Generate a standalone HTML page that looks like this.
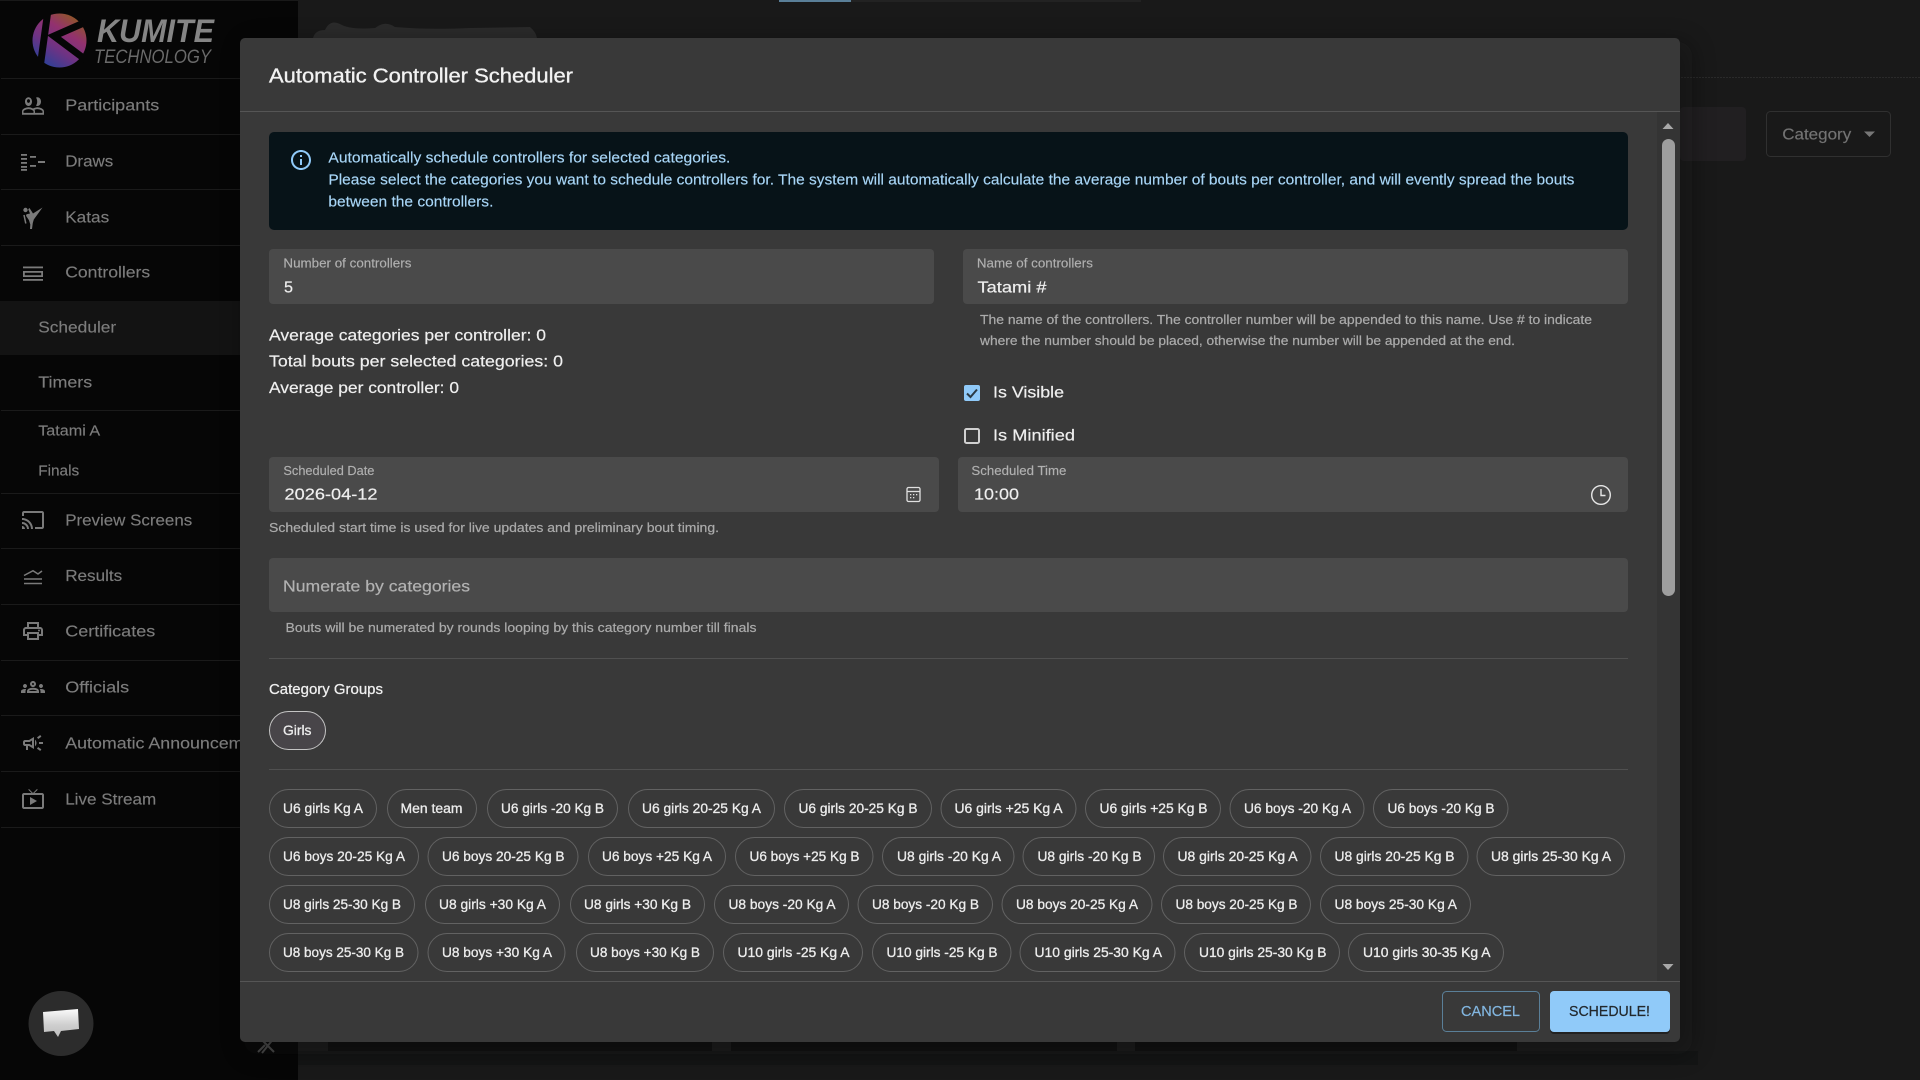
<!DOCTYPE html>
<html lang="en">
<head>
<meta charset="utf-8">
<title>Automatic Controller Scheduler</title>
<style>
html,body{margin:0;padding:0;background:#191919;width:1920px;height:1080px;overflow:hidden}
svg{display:block}
text{font-family:"Liberation Sans",sans-serif;white-space:pre}
.n{font-size:16px;fill:#7c7c7c;stroke:#7c7c7c;stroke-width:.15;transform:translateX(-.8px)}
.l{font-size:13px;fill:#b0b0b0;stroke:#b0b0b0;stroke-width:.15;transform:translateX(-.6px)}
.v{font-size:16px;fill:#efefef;stroke:#efefef;stroke-width:.2}
.a{font-size:14.5px;fill:#a8d6f7;stroke:#a8d6f7;stroke-width:.15;transform:translateX(-.6px)}
.h{font-size:12.5px;fill:#ababab;stroke:#ababab;stroke-width:.2}
.c{font-size:13.5px;fill:#ececec;stroke:#ececec;stroke-width:.3}
.chip{fill:none;stroke:#626262;stroke-width:1}
.i{fill:#7a7a7a}
</style>
</head>
<body>
<svg xmlns="http://www.w3.org/2000/svg" width="1920" height="1080" viewBox="0 0 1920 1080">
<defs>
<linearGradient id="lg" x1="0.85" y1="0" x2="0.2" y2="1">
<stop offset="0" stop-color="#8f5f16"/><stop offset=".35" stop-color="#93316f"/><stop offset=".65" stop-color="#6d3384"/><stop offset="1" stop-color="#24429a"/>
</linearGradient>
<linearGradient id="bub" x1="0" y1="0" x2="0" y2="1">
<stop offset="0" stop-color="#fbfbfb"/><stop offset=".55" stop-color="#d0d0d0"/><stop offset="1" stop-color="#bdbdbd"/>
</linearGradient>
<filter id="sh" x="-10%" y="-10%" width="120%" height="120%"><feGaussianBlur stdDeviation="12"/></filter>
</defs>

<!-- page background -->
<rect width="1920" height="1080" fill="#191919"/>
<rect x="779" y="0" width="72" height="2" fill="#5a7f98"/>
<rect x="851" y="0" width="290" height="2" fill="#222"/>
<path d="M313 38Q315 30 325 30Q330 19 340 24Q350 30 375 28Q385 20 395 27Q430 30 470 28L530 27Q536 32 537 38z" fill="#2b2b2b"/>
<line x1="298" y1="77.5" x2="1920" y2="77.5" stroke="#2a2a2a" stroke-dasharray="2 1"/>
<rect x="1680" y="107" width="66" height="54" rx="4" fill="#211f21"/>
<rect x="1766.500" y="111.500" width="124" height="45" rx="4" fill="none" stroke="#303030"/>
<text class="n" x="1783" y="139.500" textLength="69" lengthAdjust="spacingAndGlyphs" style="fill:#737373;stroke:#737373">Category</text>
<path d="M1864 131.500h11l-5.500 5.500z" fill="#777"/>
<rect x="328" y="1042" width="384" height="9" fill="#0d0d0d"/>
<rect x="731" y="1042" width="386" height="9" fill="#0d0d0d"/>
<rect x="1135" y="1042" width="382" height="9" fill="#0d0d0d"/>
<rect x="298" y="1051" width="1400" height="14" fill="#141515"/>

<!-- sidebar -->
<rect x="0" y="1" width="298" height="1079" fill="#060606"/>
<rect x="0" y="301" width="298" height="54" fill="#131313"/>
<g stroke="#1a1a1a">
<line x1="1" y1="78.500" x2="298" y2="78.500"/><line x1="1" y1="134.500" x2="298" y2="134.500"/><line x1="1" y1="189.500" x2="298" y2="189.500"/><line x1="1" y1="245.500" x2="298" y2="245.500"/><line x1="1" y1="410.500" x2="298" y2="410.500"/><line x1="1" y1="493.500" x2="298" y2="493.500"/><line x1="1" y1="548.500" x2="298" y2="548.500"/><line x1="1" y1="604.500" x2="298" y2="604.500"/><line x1="1" y1="660.500" x2="298" y2="660.500"/><line x1="1" y1="715.500" x2="298" y2="715.500"/><line x1="1" y1="771.500" x2="298" y2="771.500"/><line x1="1" y1="827.500" x2="298" y2="827.500"/>
</g>

<!-- logo -->
<circle cx="59.500" cy="40.500" r="27" fill="url(#lg)"/>
<path d="M48 10L40 68" stroke="#060606" stroke-width="7" fill="none"/>
<path d="M86 22L54 36L86 60" stroke="#060606" stroke-width="7" fill="none"/>
<text x="97" y="42" font-size="32" font-weight="700" font-style="italic" fill="#858585" textLength="117" lengthAdjust="spacingAndGlyphs">KUMITE</text>
<text x="94" y="63" font-size="19" font-style="italic" fill="#6a6a6a" textLength="117" lengthAdjust="spacingAndGlyphs">TECHNOLOGY</text>

<!-- sidebar text -->
<text class="n" x="66" y="110.500" textLength="94" lengthAdjust="spacingAndGlyphs">Participants</text>
<text class="n" x="66" y="166.500" textLength="48" lengthAdjust="spacingAndGlyphs">Draws</text>
<text class="n" x="66" y="222.500" textLength="44" lengthAdjust="spacingAndGlyphs">Katas</text>
<text class="n" x="66" y="277.500" textLength="85" lengthAdjust="spacingAndGlyphs">Controllers</text>
<text class="n" x="39" y="332.500" textLength="78" lengthAdjust="spacingAndGlyphs">Scheduler</text>
<text class="n" x="39" y="387.500" textLength="54" lengthAdjust="spacingAndGlyphs">Timers</text>
<text class="n" x="39" y="435.500" textLength="62" lengthAdjust="spacingAndGlyphs" style="font-size:14.500px">Tatami A</text>
<text class="n" x="39" y="475.500" textLength="41" lengthAdjust="spacingAndGlyphs" style="font-size:14.500px">Finals</text>
<text class="n" x="66" y="525.500" textLength="127" lengthAdjust="spacingAndGlyphs">Preview Screens</text>
<text class="n" x="66" y="581" textLength="57" lengthAdjust="spacingAndGlyphs">Results</text>
<text class="n" x="66" y="636.500" textLength="90" lengthAdjust="spacingAndGlyphs">Certificates</text>
<text class="n" x="66" y="692.500" textLength="64" lengthAdjust="spacingAndGlyphs">Officials</text>
<text class="n" x="66" y="748.500" textLength="212" lengthAdjust="spacingAndGlyphs">Automatic Announcements</text>
<text class="n" x="66" y="804.500" textLength="91" lengthAdjust="spacingAndGlyphs">Live Stream</text>

<!-- sidebar icons -->
<g transform="translate(21,91) scale(1,1.25)"><path class="i" d="M16.500 13c-1.200 0-3.070.34-4.500 1-1.430-.67-3.300-1-4.500-1C5.330 13 1 14.080 1 16.250V19h22v-2.750c0-2.170-4.330-3.250-6.500-3.250zm-4 4.500h-10v-1.250c0-.54 2.560-1.750 5-1.750s5 1.210 5 1.750v1.250zm9 0H14v-1.250c0-.46-.2-.86-.52-1.220.88-.3 1.960-.53 3.020-.53 2.440 0 5 1.210 5 1.750v1.250zM7.500 12c1.930 0 3.500-1.570 3.500-3.500S9.430 5 7.500 5 4 6.570 4 8.500 5.570 12 7.500 12zm0-5.500c.83 0 1.500.67 1.500 1.500s-.67 1.500-1.500 1.500S6 8.830 6 8 6.670 6.500 7.500 6.500zm9 5.500c1.930 0 3.500-1.570 3.500-3.500S18.430 5 16.500 5c-.6 0-1 .1-1.500.3.800.9 1.200 2 1.200 3.200s-.4 2.300-1.200 3.200c.5.2.9.3 1.500.3z"/></g>
<g class="i">
<rect x="21" y="154" width="6" height="1.800"/><rect x="21" y="158" width="6" height="1.800"/><rect x="21" y="162" width="6" height="1.800"/><rect x="21" y="166" width="6" height="1.800"/><rect x="21" y="169" width="6" height="1.800"/>
<rect x="30" y="156" width="6" height="1.800"/><rect x="30" y="165" width="6" height="1.800"/><rect x="38" y="161" width="7" height="2"/>
</g>
<g>
<circle cx="25.500" cy="210" r="2.200" class="i"/>
<path class="i" d="M42.500 207.500L33 213.500 29.500 208l-1.300 1.300 1.800 4.200-3.500.8-.5 1.500 3 4.500 1.300 4.200-.3 4.500h2l.8-6 1-3.500z"/>
<path d="M24 215l1.800 8.500" stroke="#7a7a7a" stroke-width="1.500" fill="none"/>
</g>
<g class="i">
<rect x="23" y="266.500" width="20" height="1.800"/>
<path d="M23 271h20v6H23zm1.800 1.700v2.600h16.400v-2.600z"/>
<rect x="23" y="279" width="20" height="1.800"/>
</g>
<g transform="translate(21,508)"><path class="i" d="M21 3H3c-1.100 0-2 .9-2 2v3h2V5h18v14h-7v2h7c1.100 0 2-.9 2-2V5c0-1.100-.9-2-2-2zM1 18v3h3c0-1.660-1.340-3-3-3zm0-4v2c2.760 0 5 2.240 5 5h2c0-3.870-3.130-7-7-7zm0-4v2c4.970 0 9 4.030 9 9h2c0-6.080-4.930-11-11-11z"/></g>
<g fill="none" stroke="#7a7a7a" stroke-width="1.500">
<path d="M24 575.500L33 570.700L38 574L42 571"/>
<path d="M24 579h18M24 583.500h18"/>
</g>
<g transform="translate(21,619)"><path class="i" d="M19 8h-1V3H6v5H5c-1.660 0-3 1.340-3 3v6h4v4h12v-4h4v-6c0-1.660-1.340-3-3-3zM8 5h8v3H8V5zm8 12v2H8v-4h8v2zm2-2v-2H6v2H4v-4c0-.55.45-1 1-1h14c.55 0 1 .45 1 1v4h-2z"/><circle class="i" cx="18" cy="11.500" r="1"/></g>
<g transform="translate(21,675)"><path class="i" d="M4 13c1.100 0 2-.9 2-2s-.9-2-2-2-2 .9-2 2 .9 2 2 2zm1.130 1.100C4.760 14.040 4.390 14 4 14c-.99 0-1.930.21-2.780.58C.48 14.900 0 15.620 0 16.430V18h4.500v-1.610c0-.83.23-1.610.63-2.290zM20 13c1.100 0 2-.9 2-2s-.9-2-2-2-2 .9-2 2 .9 2 2 2zm4 3.430c0-.81-.48-1.530-1.220-1.850-.85-.37-1.790-.58-2.780-.58-.39 0-.76.04-1.130.1.4.68.63 1.460.63 2.290V18H24v-1.570zm-7.760-2.780C15.070 13.140 13.630 12.750 12 12.750s-3.070.4-4.240.9C6.680 14.130 6 15.210 6 16.390V18h12v-1.610c0-1.180-.68-2.260-1.760-2.740zM8.070 16c.09-.23.13-.39.91-.69.97-.38 1.990-.56 3.020-.56s2.050.18 3.020.56c.77.3.81.46.91.69H8.070zM12 8c.55 0 1 .45 1 1s-.45 1-1 1-1-.45-1-1 .45-1 1-1m0-2c-1.660 0-3 1.340-3 3s1.340 3 3 3 3-1.340 3-3-1.340-3-3-3z"/></g>
<g transform="translate(21,731)"><path class="i" d="M18 11v2h4v-2h-4zm-2 6.610c.96.71 2.210 1.650 3.200 2.390.4-.53.8-1.070 1.200-1.600-.99-.74-2.240-1.680-3.200-2.400-.4.54-.8 1.080-1.200 1.610zM20.400 5.600c-.4-.53-.8-1.070-1.200-1.600-.99.74-2.240 1.680-3.200 2.400.4.53.8 1.070 1.200 1.600.96-.72 2.210-1.650 3.200-2.400zM4 9c-1.100 0-2 .9-2 2v2c0 1.100.9 2 2 2h1v4h2v-4h1l5 3V6L8 9H4zm5.030 1.710L11 9.530v4.940l-1.970-1.180-.48-.29H4v-2h4.550l.48-.29zM15.500 12c0-1.330-.58-2.530-1.500-3.350v6.690c.92-.81 1.500-2.010 1.500-3.340z"/></g>
<g transform="translate(21,787)"><path class="i" d="M9 10v8l7-4zm12-4h-7.580l3.290-3.290L16 2l-4 4h-.03l-4-4-.69.71L10.560 6H3c-1.100 0-2 .9-2 2v12c0 1.100.9 2 2 2h18c1.100 0 2-.9 2-2V8c0-1.100-.9-2-2-2zm0 14H3V8h18v12z"/></g>

<!-- chat bubble and pin -->
<circle cx="61" cy="1023.500" r="32.500" fill="#2c2c2c"/>
<path d="M43 1012l35-3 1 20-18 2-3 6-4-6-10 1z" fill="url(#bub)"/>
<path d="M260 1038l14 14M274 1038l-12 15M258 1052l7-7" stroke="#474747" stroke-width="2" fill="none"/>

<!-- dialog -->
<rect x="244" y="42" width="1448" height="1012" rx="14" fill="#0a0c0c" opacity=".35" filter="url(#sh)"/>
<rect x="240" y="38" width="1440" height="1004" rx="5" fill="#393939"/>
<text x="269" y="82.500" font-size="20.500" fill="#f2f2f2" stroke="#f2f2f2" stroke-width=".35" textLength="304" lengthAdjust="spacingAndGlyphs">Automatic Controller Scheduler</text>
<line x1="240" y1="111.500" x2="1680" y2="111.500" stroke="#555"/>
<line x1="240" y1="981.500" x2="1680" y2="981.500" stroke="#555"/>

<!-- scrollbar -->
<rect x="1657" y="112" width="23" height="869" fill="#343434"/>
<path d="M1662.500 129l5.500-6 5.500 6z" fill="#a8a8a8"/>
<rect x="1662" y="139" width="13" height="457" rx="6.500" fill="#9e9e9e"/>
<path d="M1662.500 964h11l-5.500 6z" fill="#a8a8a8"/>

<!-- alert -->
<rect x="269" y="132" width="1359" height="98" rx="5" fill="#071318"/>
<g transform="translate(289,148)"><path fill="#90caf9" d="M11 7h2v2h-2zm0 4h2v6h-2zm1-9C6.480 2 2 6.480 2 12s4.480 10 10 10 10-4.480 10-10S17.520 2 12 2zm0 18c-4.410 0-8-3.590-8-8s3.590-8 8-8 8 3.590 8 8-3.590 8-8 8z"/></g>
<text class="a" x="329" y="162.500" textLength="402" lengthAdjust="spacingAndGlyphs">Automatically schedule controllers for selected categories.</text>
<text class="a" x="329" y="184.500" textLength="1246" lengthAdjust="spacingAndGlyphs">Please select the categories you want to schedule controllers for. The system will automatically calculate the average number of bouts per controller, and will evently spread the bouts</text>
<text class="a" x="329" y="206.500" textLength="165" lengthAdjust="spacingAndGlyphs">between the controllers.</text>

<!-- number / name fields -->
<rect x="269" y="249" width="665" height="55" rx="4" fill="#4a4a4a"/>
<text class="l" x="284" y="267.500" textLength="128" lengthAdjust="spacingAndGlyphs">Number of controllers</text>
<text class="v" x="284" y="292.500" textLength="9" lengthAdjust="spacingAndGlyphs">5</text>
<rect x="963" y="249" width="665" height="55" rx="4" fill="#4a4a4a"/>
<text class="l" x="977.500" y="267.500" textLength="116" lengthAdjust="spacingAndGlyphs">Name of controllers</text>
<text class="v" x="977.500" y="292.500" textLength="69" lengthAdjust="spacingAndGlyphs">Tatami #</text>
<text class="h" x="980" y="324" textLength="612" lengthAdjust="spacingAndGlyphs">The name of the controllers. The controller number will be appended to this name. Use # to indicate</text>
<text class="h" x="980" y="345" textLength="535" lengthAdjust="spacingAndGlyphs">where the number should be placed, otherwise the number will be appended at the end.</text>

<!-- stats -->
<text class="v" x="269" y="340.500" textLength="277" lengthAdjust="spacingAndGlyphs">Average categories per controller: 0</text>
<text class="v" x="269" y="366.500" textLength="294" lengthAdjust="spacingAndGlyphs">Total bouts per selected categories: 0</text>
<text class="v" x="269" y="393" textLength="190" lengthAdjust="spacingAndGlyphs">Average per controller: 0</text>

<!-- checkboxes -->
<rect x="964" y="385" width="16" height="16" rx="2" fill="#90caf9"/>
<path d="M967 393.500l3.500 3.500 6.500-7.500" fill="none" stroke="#2b3a45" stroke-width="2"/>
<text class="v" x="993" y="397.500" textLength="71" lengthAdjust="spacingAndGlyphs">Is Visible</text>
<rect x="965" y="429" width="14" height="14" rx="1.500" fill="none" stroke="#d0d0d0" stroke-width="2"/>
<text class="v" x="993" y="440.500" textLength="82" lengthAdjust="spacingAndGlyphs">Is Minified</text>

<!-- date / time -->
<rect x="269" y="457" width="670" height="55" rx="4" fill="#4a4a4a"/>
<text class="l" x="284" y="475" textLength="91" lengthAdjust="spacingAndGlyphs">Scheduled Date</text>
<text class="v" x="284.500" y="499.500" textLength="93" lengthAdjust="spacingAndGlyphs">2026-04-12</text>
<g fill="none" stroke="#e0e0e0" stroke-width="1.300">
<rect x="907" y="487.500" width="13" height="14" rx="1.500"/>
<path d="M907 491.500h13"/>
</g>
<g fill="#e0e0e0"><rect x="910" y="494" width="1.300" height="1.300"/><rect x="913" y="494" width="1.300" height="1.300"/><rect x="916" y="494" width="1.300" height="1.300"/><rect x="910" y="497" width="1.300" height="1.300"/><rect x="913" y="497" width="1.300" height="1.300"/></g>
<rect x="958" y="457" width="670" height="55" rx="4" fill="#4a4a4a"/>
<text class="l" x="972" y="475" textLength="95" lengthAdjust="spacingAndGlyphs">Scheduled Time</text>
<text class="v" x="974" y="499.500" textLength="45" lengthAdjust="spacingAndGlyphs">10:00</text>
<circle cx="1601" cy="495" r="9.300" fill="none" stroke="#e6e6e6" stroke-width="1.400"/>
<path d="M1601 489v6.500h4.500" fill="none" stroke="#e6e6e6" stroke-width="1.400"/>
<text class="h" x="269" y="532" textLength="450" lengthAdjust="spacingAndGlyphs">Scheduled start time is used for live updates and preliminary bout timing.</text>

<!-- numerate -->
<rect x="269" y="558" width="1359" height="54" rx="4" fill="#4a4a4a"/>
<text class="v" x="283" y="591.500" textLength="187" lengthAdjust="spacingAndGlyphs" style="fill:#b2b2b2;stroke:#b2b2b2">Numerate by categories</text>
<text class="h" x="285.500" y="632" textLength="471" lengthAdjust="spacingAndGlyphs">Bouts will be numerated by rounds looping by this category number till finals</text>
<line x1="269" y1="658.500" x2="1628" y2="658.500" stroke="#505050"/>

<!-- groups -->
<text x="269" y="694" font-size="14.500" fill="#f0f0f0" stroke="#f0f0f0" stroke-width=".25" textLength="114" lengthAdjust="spacingAndGlyphs">Category Groups</text>
<rect x="269.500" y="711.500" width="56" height="38" rx="19" fill="#484549" stroke="#c4c4c4"/>
<text class="c" x="283" y="735" textLength="28.500" lengthAdjust="spacingAndGlyphs">Girls</text>
<line x1="269" y1="769.500" x2="1628" y2="769.500" stroke="#505050"/>

<!-- chips row 1 -->
<rect class="chip" x="269.500" y="789.500" width="107" height="38" rx="19"/><text class="c" x="283" y="813" textLength="80" lengthAdjust="spacingAndGlyphs">U6 girls Kg A</text>
<rect class="chip" x="387.500" y="789.500" width="89" height="38" rx="19"/><text class="c" x="400.500" y="813" textLength="62" lengthAdjust="spacingAndGlyphs">Men team</text>
<rect class="chip" x="487.500" y="789.500" width="130" height="38" rx="19"/><text class="c" x="501" y="813" textLength="103" lengthAdjust="spacingAndGlyphs">U6 girls -20 Kg B</text>
<rect class="chip" x="628.500" y="789.500" width="146" height="38" rx="19"/><text class="c" x="642" y="813" textLength="119" lengthAdjust="spacingAndGlyphs">U6 girls 20-25 Kg A</text>
<rect class="chip" x="784.500" y="789.500" width="147" height="38" rx="19"/><text class="c" x="798.500" y="813" textLength="119" lengthAdjust="spacingAndGlyphs">U6 girls 20-25 Kg B</text>
<rect class="chip" x="941" y="789.500" width="135" height="38" rx="19"/><text class="c" x="954.500" y="813" textLength="108" lengthAdjust="spacingAndGlyphs">U6 girls +25 Kg A</text>
<rect class="chip" x="1085.500" y="789.500" width="135" height="38" rx="19"/><text class="c" x="1099.500" y="813" textLength="108" lengthAdjust="spacingAndGlyphs">U6 girls +25 Kg B</text>
<rect class="chip" x="1230" y="789.500" width="134" height="38" rx="19"/><text class="c" x="1244" y="813" textLength="107" lengthAdjust="spacingAndGlyphs">U6 boys -20 Kg A</text>
<rect class="chip" x="1373.500" y="789.500" width="134.500" height="38" rx="19"/><text class="c" x="1387.500" y="813" textLength="107" lengthAdjust="spacingAndGlyphs">U6 boys -20 Kg B</text>

<!-- chips row 2 -->
<rect class="chip" x="269.500" y="837.500" width="149" height="38" rx="19"/><text class="c" x="283" y="861" textLength="122" lengthAdjust="spacingAndGlyphs">U6 boys 20-25 Kg A</text>
<rect class="chip" x="428" y="837.500" width="150" height="38" rx="19"/><text class="c" x="442" y="861" textLength="122.500" lengthAdjust="spacingAndGlyphs">U6 boys 20-25 Kg B</text>
<rect class="chip" x="588.500" y="837.500" width="137" height="38" rx="19"/><text class="c" x="602" y="861" textLength="110" lengthAdjust="spacingAndGlyphs">U6 boys +25 Kg A</text>
<rect class="chip" x="735.500" y="837.500" width="137.500" height="38" rx="19"/><text class="c" x="749.500" y="861" textLength="110" lengthAdjust="spacingAndGlyphs">U6 boys +25 Kg B</text>
<rect class="chip" x="882.500" y="837.500" width="131.500" height="38" rx="19"/><text class="c" x="897" y="861" textLength="104" lengthAdjust="spacingAndGlyphs">U8 girls -20 Kg A</text>
<rect class="chip" x="1023" y="837.500" width="131.500" height="38" rx="19"/><text class="c" x="1037.500" y="861" textLength="104" lengthAdjust="spacingAndGlyphs">U8 girls -20 Kg B</text>
<rect class="chip" x="1163.500" y="837.500" width="147.500" height="38" rx="19"/><text class="c" x="1177.500" y="861" textLength="120" lengthAdjust="spacingAndGlyphs">U8 girls 20-25 Kg A</text>
<rect class="chip" x="1320.500" y="837.500" width="147.500" height="38" rx="19"/><text class="c" x="1334.500" y="861" textLength="120" lengthAdjust="spacingAndGlyphs">U8 girls 20-25 Kg B</text>
<rect class="chip" x="1477" y="837.500" width="147.500" height="38" rx="19"/><text class="c" x="1491" y="861" textLength="120" lengthAdjust="spacingAndGlyphs">U8 girls 25-30 Kg A</text>

<!-- chips row 3 -->
<rect class="chip" x="269.500" y="885.500" width="145" height="38" rx="19"/><text class="c" x="283" y="909" textLength="118" lengthAdjust="spacingAndGlyphs">U8 girls 25-30 Kg B</text>
<rect class="chip" x="425.500" y="885.500" width="134" height="38" rx="19"/><text class="c" x="439" y="909" textLength="107" lengthAdjust="spacingAndGlyphs">U8 girls +30 Kg A</text>
<rect class="chip" x="570.500" y="885.500" width="134" height="38" rx="19"/><text class="c" x="584" y="909" textLength="107" lengthAdjust="spacingAndGlyphs">U8 girls +30 Kg B</text>
<rect class="chip" x="714.500" y="885.500" width="134" height="38" rx="19"/><text class="c" x="728.500" y="909" textLength="107" lengthAdjust="spacingAndGlyphs">U8 boys -20 Kg A</text>
<rect class="chip" x="858" y="885.500" width="134.500" height="38" rx="19"/><text class="c" x="872" y="909" textLength="107" lengthAdjust="spacingAndGlyphs">U8 boys -20 Kg B</text>
<rect class="chip" x="1002" y="885.500" width="150" height="38" rx="19"/><text class="c" x="1016" y="909" textLength="122" lengthAdjust="spacingAndGlyphs">U8 boys 20-25 Kg A</text>
<rect class="chip" x="1161.500" y="885.500" width="149" height="38" rx="19"/><text class="c" x="1175.500" y="909" textLength="122" lengthAdjust="spacingAndGlyphs">U8 boys 20-25 Kg B</text>
<rect class="chip" x="1320.500" y="885.500" width="150" height="38" rx="19"/><text class="c" x="1334.500" y="909" textLength="122.500" lengthAdjust="spacingAndGlyphs">U8 boys 25-30 Kg A</text>

<!-- chips row 4 -->
<rect class="chip" x="269.500" y="933.500" width="148.500" height="38" rx="19"/><text class="c" x="283" y="957" textLength="121" lengthAdjust="spacingAndGlyphs">U8 boys 25-30 Kg B</text>
<rect class="chip" x="428" y="933.500" width="137" height="38" rx="19"/><text class="c" x="442" y="957" textLength="110" lengthAdjust="spacingAndGlyphs">U8 boys +30 Kg A</text>
<rect class="chip" x="576.500" y="933.500" width="137" height="38" rx="19"/><text class="c" x="590" y="957" textLength="110" lengthAdjust="spacingAndGlyphs">U8 boys +30 Kg B</text>
<rect class="chip" x="723.500" y="933.500" width="139" height="38" rx="19"/><text class="c" x="737.500" y="957" textLength="112" lengthAdjust="spacingAndGlyphs">U10 girls -25 Kg A</text>
<rect class="chip" x="872.500" y="933.500" width="138.500" height="38" rx="19"/><text class="c" x="886.500" y="957" textLength="111" lengthAdjust="spacingAndGlyphs">U10 girls -25 Kg B</text>
<rect class="chip" x="1020" y="933.500" width="155" height="38" rx="19"/><text class="c" x="1034.500" y="957" textLength="127.500" lengthAdjust="spacingAndGlyphs">U10 girls 25-30 Kg A</text>
<rect class="chip" x="1184.500" y="933.500" width="155" height="38" rx="19"/><text class="c" x="1199" y="957" textLength="127.500" lengthAdjust="spacingAndGlyphs">U10 girls 25-30 Kg B</text>
<rect class="chip" x="1348.500" y="933.500" width="155" height="38" rx="19"/><text class="c" x="1363" y="957" textLength="127.500" lengthAdjust="spacingAndGlyphs">U10 girls 30-35 Kg A</text>

<!-- footer buttons -->
<rect x="1442.500" y="991.500" width="97" height="40" rx="4" fill="none" stroke="#5a7f98"/>
<text x="1461" y="1016" font-size="14.500" fill="#82b6e0" stroke="#82b6e0" stroke-width=".2" textLength="59" lengthAdjust="spacingAndGlyphs">CANCEL</text>
<rect x="1550" y="993" width="120" height="41" rx="4" fill="#222"/>
<rect x="1550" y="991" width="120" height="41" rx="4" fill="#90caf9"/>
<text x="1569" y="1016" font-size="14.500" fill="#22282d" stroke="#22282d" stroke-width=".2" textLength="81" lengthAdjust="spacingAndGlyphs">SCHEDULE!</text>
</svg>
</body>
</html>
